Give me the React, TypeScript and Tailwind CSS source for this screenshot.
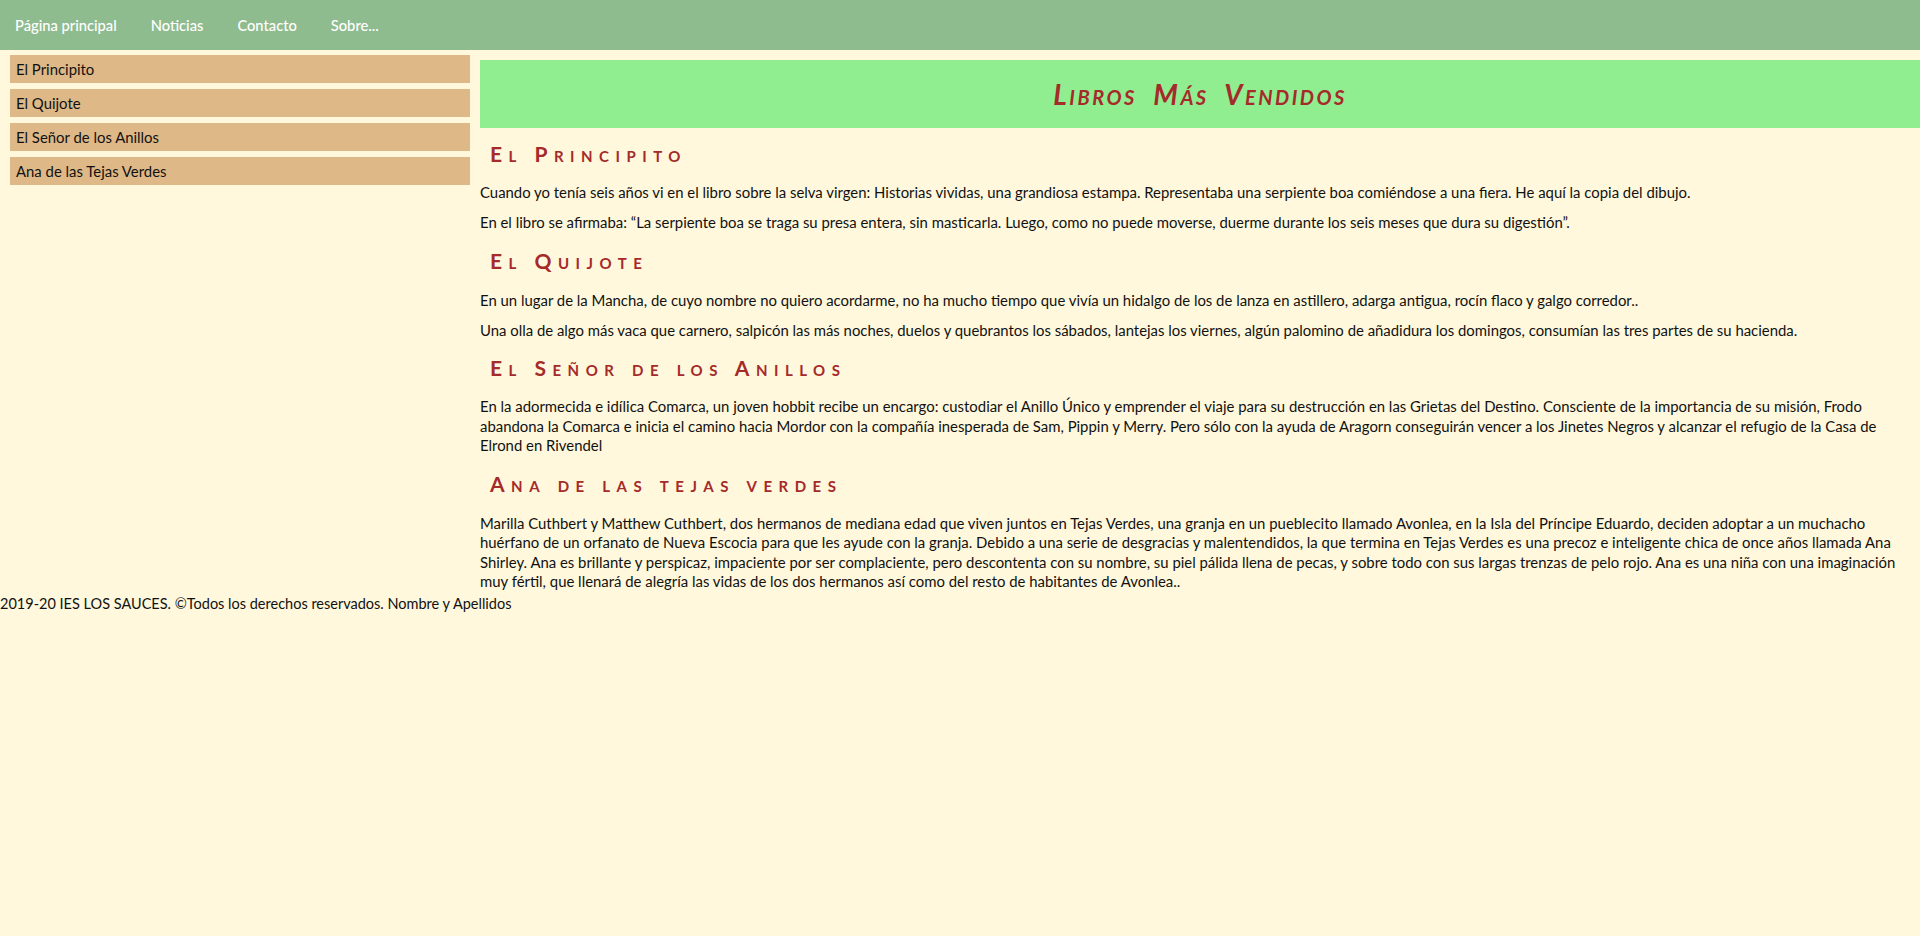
import React from "react";

const navItems = ["Página principal", "Noticias", "Contacto", "Sobre..."];
const sideItems = ["El Principito", "El Quijote", "El Señor de los Anillos", "Ana de las Tejas Verdes"];

function H2({ children }: { children: React.ReactNode }) {
  return (
    <h2 className="ml-[10px] h-[28px] leading-[28px] text-[21px] font-bold [font-variant:small-caps] tracking-[6.5px] text-[#a52a2a]">
      {children}
    </h2>
  );
}

function P({ children, className = "" }: { children: React.ReactNode; className?: string }) {
  return <p className={"leading-[19.5px] " + className}>{children}</p>;
}

export default function App() {
  return (
    <div className="min-h-[936px] bg-[#fff8dc] font-[Lato,sans-serif] text-[14.9px] text-[#111]">
      <nav className="flex h-[50px] items-center bg-[#8fbc8f] pl-[15px] text-[14.7px] font-medium text-white">
        {navItems.map((n) => (
          <span key={n} className="mr-[34px]">
            {n}
          </span>
        ))}
      </nav>
      <div className="flex">
        <aside className="ml-[10px] mt-[5px] flex w-[460px] shrink-0 flex-col gap-[6px]">
          {sideItems.map((s) => (
            <div key={s} className="h-[28px] bg-[#deb887] pl-[6px] leading-[28px]">
              {s}
            </div>
          ))}
        </aside>
        <main className="ml-[10px] mt-[10px] flex min-w-0 flex-1 flex-col">
          <header className="flex h-[68px] items-center justify-center bg-[#90ee90]">
            <h1 className="text-[28px] font-bold italic [font-variant:small-caps] tracking-[2.5px] [word-spacing:8px] text-[#a52a2a]">
              Libros Más Vendidos
            </h1>
          </header>
          <div className="mt-[12px]">
            <H2>El Principito</H2>
            <P className="mt-[15px]">
              Cuando yo tenía seis años vi en el libro sobre la selva virgen: Historias vividas, una grandiosa estampa. Representaba una serpiente boa comiéndose a una fiera. He aquí la copia del dibujo.
            </P>
            <P className="mt-[10px]">
              En el libro se afirmaba: “La serpiente boa se traga su presa entera, sin masticarla. Luego, como no puede moverse, duerme durante los seis meses que dura su digestión”.
            </P>
          </div>
          <div className="mt-[15px]">
            <H2>El Quijote</H2>
            <P className="mt-[16px]">
              En un lugar de la Mancha, de cuyo nombre no quiero acordarme, no ha mucho tiempo que vivía un hidalgo de los de lanza en astillero, adarga antigua, rocín flaco y galgo corredor..
            </P>
            <P className="mt-[10px]">
              Una olla de algo más vaca que carnero, salpicón las más noches, duelos y quebrantos los sábados, lantejas los viernes, algún palomino de añadidura los domingos, consumían las tres partes de su hacienda.
            </P>
          </div>
          <div className="mt-[14px]">
            <H2>El Señor de los Anillos</H2>
            <P className="mt-[15px]">
              En la adormecida e idílica Comarca, un joven hobbit recibe un encargo: custodiar el Anillo Único y emprender el viaje para su destrucción en las Grietas del Destino. Consciente de la importancia de su misión, Frodo
              <br />
              abandona la Comarca e inicia el camino hacia Mordor con la compañía inesperada de Sam, Pippin y Merry. Pero sólo con la ayuda de Aragorn conseguirán vencer a los Jinetes Negros y alcanzar el refugio de la Casa de
              <br />
              Elrond en Rivendel
            </P>
          </div>
          <div className="mt-[14px]">
            <H2>Ana de las tejas verdes</H2>
            <P className="mt-[16px]">
              Marilla Cuthbert y Matthew Cuthbert, dos hermanos de mediana edad que viven juntos en Tejas Verdes, una granja en un pueblecito llamado Avonlea, en la Isla del Príncipe Eduardo, deciden adoptar a un muchacho
              <br />
              huérfano de un orfanato de Nueva Escocia para que les ayude con la granja. Debido a una serie de desgracias y malentendidos, la que termina en Tejas Verdes es una precoz e inteligente chica de once años llamada Ana
              <br />
              Shirley. Ana es brillante y perspicaz, impaciente por ser complaciente, pero descontenta con su nombre, su piel pálida llena de pecas, y sobre todo con sus largas trenzas de pelo rojo. Ana es una niña con una imaginación
              <br />
              muy fértil, que llenará de alegría las vidas de los dos hermanos así como del resto de habitantes de Avonlea..
            </P>
          </div>
        </main>
      </div>
      <footer className="mt-[2px] text-[14.5px] leading-[19.5px]">
        2019-20 IES LOS SAUCES. ©Todos los derechos reservados. Nombre y Apellidos
      </footer>
    </div>
  );
}
